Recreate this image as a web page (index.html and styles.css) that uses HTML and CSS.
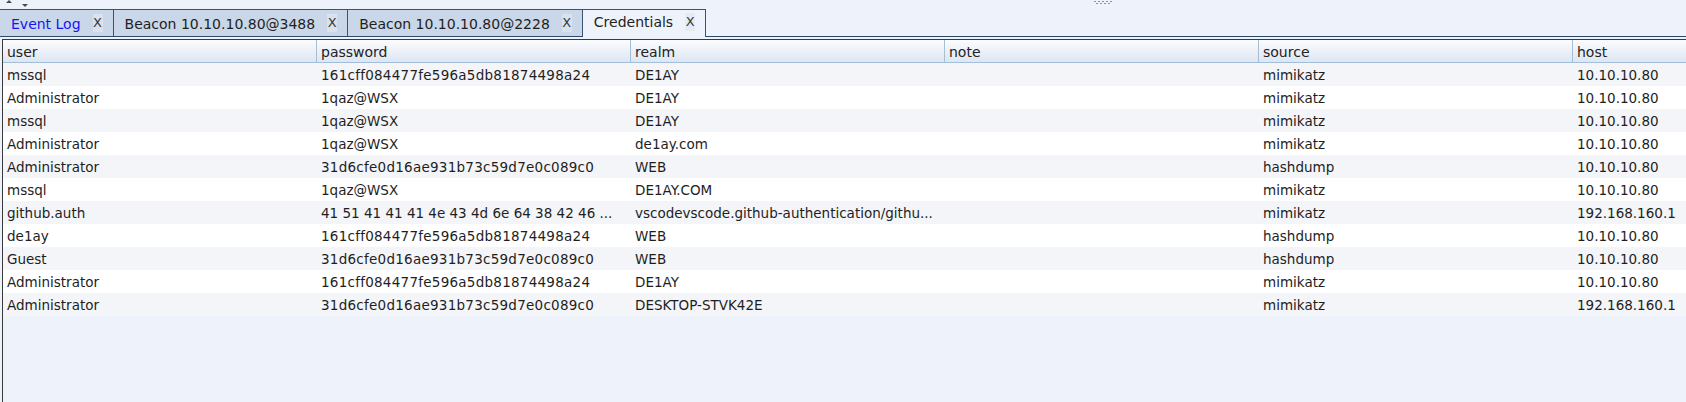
FILE: index.html
```html
<!DOCTYPE html>
<html>
<head>
<meta charset="utf-8">
<link rel="stylesheet" href="styles.css">
</head>
<body>
<div class="app">
  <div class="topbar">
    <svg class="arrows" width="30" height="9" viewBox="0 0 30 9">
      <polygon points="6,3 12,3 9,0" fill="#4a4a4a"/>
      <polygon points="22,4 28,4 25,7" fill="#4a4a4a"/>
    </svg>
    <svg class="grip" width="20" height="6" viewBox="0 0 20 6">
      <g fill="#8195b2">
        <rect x="0" y="1" width="2" height="1"/><rect x="4" y="1" width="2" height="1"/><rect x="8" y="1" width="2" height="1"/><rect x="12" y="1" width="2" height="1"/><rect x="16" y="1" width="2" height="1"/>
        <rect x="2" y="3" width="2" height="1"/><rect x="6" y="3" width="2" height="1"/><rect x="10" y="3" width="2" height="1"/><rect x="14" y="3" width="2" height="1"/>
      </g>
    </svg>
  </div>
  <div class="tabstrip">
    <div class="tab tab-first"><span class="tab-label tab-label-blue">Event Log</span><span class="tab-close">X</span></div>
    <div class="tab"><span class="tab-label">Beacon 10.10.10.80@3488</span><span class="tab-close">X</span></div>
    <div class="tab"><span class="tab-label">Beacon 10.10.10.80@2228</span><span class="tab-close">X</span></div>
    <div class="tab tab-selected"><span class="tab-label">Credentials</span><span class="tab-close">X</span></div>
    <div class="tab-fill"></div>
  </div>
  <div class="grid">
    <div class="row head">
      <div class="cell">user</div><div class="cell">password</div><div class="cell">realm</div><div class="cell">note</div><div class="cell">source</div><div class="cell">host</div>
    </div>
    <div class="row"><div class="cell">mssql</div><div class="cell hex">161cff084477fe596a5db81874498a24</div><div class="cell">DE1AY</div><div class="cell"></div><div class="cell">mimikatz</div><div class="cell">10.10.10.80</div></div>
    <div class="row"><div class="cell">Administrator</div><div class="cell">1qaz@WSX</div><div class="cell">DE1AY</div><div class="cell"></div><div class="cell">mimikatz</div><div class="cell">10.10.10.80</div></div>
    <div class="row"><div class="cell">mssql</div><div class="cell">1qaz@WSX</div><div class="cell">DE1AY</div><div class="cell"></div><div class="cell">mimikatz</div><div class="cell">10.10.10.80</div></div>
    <div class="row"><div class="cell">Administrator</div><div class="cell">1qaz@WSX</div><div class="cell">de1ay.com</div><div class="cell"></div><div class="cell">mimikatz</div><div class="cell">10.10.10.80</div></div>
    <div class="row"><div class="cell">Administrator</div><div class="cell hex">31d6cfe0d16ae931b73c59d7e0c089c0</div><div class="cell">WEB</div><div class="cell"></div><div class="cell">hashdump</div><div class="cell">10.10.10.80</div></div>
    <div class="row"><div class="cell">mssql</div><div class="cell">1qaz@WSX</div><div class="cell">DE1AY.COM</div><div class="cell"></div><div class="cell">mimikatz</div><div class="cell">10.10.10.80</div></div>
    <div class="row"><div class="cell">github.auth</div><div class="cell">41 51 41 41 41 4e 43 4d 6e 64 38 42 46 ...</div><div class="cell">vscodevscode.github-authentication/githu...</div><div class="cell"></div><div class="cell">mimikatz</div><div class="cell">192.168.160.1</div></div>
    <div class="row"><div class="cell">de1ay</div><div class="cell hex">161cff084477fe596a5db81874498a24</div><div class="cell">WEB</div><div class="cell"></div><div class="cell">hashdump</div><div class="cell">10.10.10.80</div></div>
    <div class="row"><div class="cell">Guest</div><div class="cell hex">31d6cfe0d16ae931b73c59d7e0c089c0</div><div class="cell">WEB</div><div class="cell"></div><div class="cell">hashdump</div><div class="cell">10.10.10.80</div></div>
    <div class="row"><div class="cell">Administrator</div><div class="cell hex">161cff084477fe596a5db81874498a24</div><div class="cell">DE1AY</div><div class="cell"></div><div class="cell">mimikatz</div><div class="cell">10.10.10.80</div></div>
    <div class="row"><div class="cell">Administrator</div><div class="cell hex">31d6cfe0d16ae931b73c59d7e0c089c0</div><div class="cell">DESKTOP-STVK42E</div><div class="cell"></div><div class="cell">mimikatz</div><div class="cell">192.168.160.1</div></div>
  </div>
</div>
</body>
</html>
```
FILE: styles.css
```css
html, body {
  margin: 0;
  padding: 0;
  background: #eef2fa;
}
body {
  font-family: "DejaVu Sans", "Noto Sans", sans-serif;
  color: #1e1e1e;
}
.app {
  width: 1686px;
  height: 402px;
  overflow: hidden;
  background: #eef2fa;
  display: flex;
  flex-direction: column;
}
.topbar {
  height: 9px;
  display: flex;
  align-items: flex-start;
  flex: none;
}
.arrows { display: block; }
.grip { display: block; margin-left: 1064px; }

.tabstrip {
  height: 28px;
  display: flex;
  align-items: stretch;
  flex: none;
}
.tab {
  display: flex;
  align-items: center;
  box-sizing: border-box;
  padding: 0 10px 0 11px;
  background: #c9d7e8;
  border-top: 1px solid #3b5372;
  border-right: 1px solid #3b5372;
  border-bottom: 1px solid #2e4a6b;
  font-size: 14px;
  white-space: nowrap;
}
.tab-label { padding-top: 1px; }
.tab-label-blue { color: #1515f5; }
.tab-close {
  margin-left: 12px;
  width: 10px;
  height: 18px;
  line-height: 18px;
  text-align: center;
  font-size: 13px;
  color: #3a3a3a;
  background: #d9e2ee;
}
.tab-selected {
  background: #eef2fa;
  border-bottom: 0;
  padding-bottom: 3px;
}
.tab-selected .tab-label { padding-top: 0; }
.tab-selected .tab-close { background: #e6ebf3; }
.tab-fill {
  flex: 1;
  border-bottom: 1px solid #2e4a6b;
}

.grid {
  margin: 2px 0 0 2px;
  border-top: 1px solid #3a3a3a;
  border-left: 1px solid #3a3a3a;
  flex: 1;
  width: 1890px;
  background: #eef2fa;
}
.row {
  display: grid;
  grid-template-columns: repeat(6, 314px);
  box-sizing: border-box;
  height: 23px;
  padding-top: 2px;
  font-size: 13.5px;
  line-height: 21px;
  background: #ffffff;
}
.row:nth-child(even) { background: #f4f5f8; }
.cell {
  padding-left: 4px;
  white-space: nowrap;
  overflow: hidden;
}
.hex { letter-spacing: 0.25px; }
.head {
  height: 23px;
  padding-top: 2px;
  line-height: 20px;
  font-size: 14px;
  color: #222;
  background: linear-gradient(#fbfcfe, #dde6f2);
  border-bottom: 1px solid #a3bedb;
}
.head .cell {
  border-right: 1px solid #a7bdd6;
  margin-top: -2px;
  padding-top: 2px;
}
```
